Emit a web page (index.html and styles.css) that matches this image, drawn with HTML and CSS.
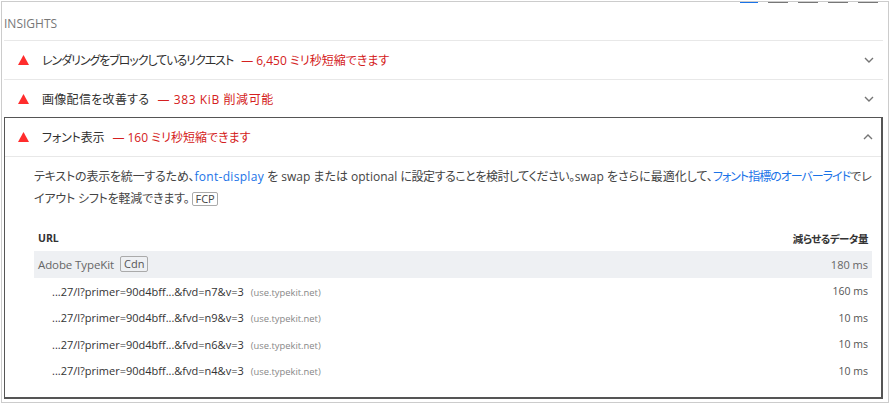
FILE: index.html
```html
<!DOCTYPE html>
<html lang="ja">
<head>
<meta charset="utf-8">
<title>Insights</title>
<link rel="stylesheet" href="styles.css">
</head>
<body>
<div class="frame">
  <div class="tabs">
    <span class="tab tab-active"></span>
    <span class="tab"></span>
    <span class="tab"></span>
    <span class="tab"></span>
    <span class="tab"></span>
  </div>
  <div class="section-title">INSIGHTS</div>
  <div class="row">
    <svg class="warn" width="11" height="10" viewBox="0 0 11 10"><path d="M5.5 0L11 10H0Z"/></svg>
    <span class="row-title title-kana">レンダリングをブロックしているリクエスト</span>
    <span class="row-note">— 6,450 ミリ秒短縮できます</span>
    <svg class="chev" width="10" height="6" viewBox="0 0 10 6"><path d="M1 1L5 5L9 1"/></svg>
  </div>
  <div class="row">
    <svg class="warn" width="11" height="10" viewBox="0 0 11 10"><path d="M5.5 0L11 10H0Z"/></svg>
    <span class="row-title title-kanji">画像配信を改善する</span>
    <span class="row-note note-wide">— 383 KiB 削減可能</span>
    <svg class="chev" width="10" height="6" viewBox="0 0 10 6"><path d="M1 1L5 5L9 1"/></svg>
  </div>
  <div class="panel">
    <div class="row row-open">
      <svg class="warn" width="11" height="10" viewBox="0 0 11 10"><path d="M5.5 0L11 10H0Z"/></svg>
      <span class="row-title">フォント表示</span>
      <span class="row-note">— 160 ミリ秒短縮できます</span>
      <svg class="chev" width="10" height="6" viewBox="0 0 10 6"><path d="M1 5L5 1L9 5"/></svg>
    </div>
    <div class="panel-body">
      <p class="desc"><span class="tight-s">テキストの表示を統一するため、</span><a class="link link-code">font-display</a> を swap または optional <span class="tight-m">に設定することを検討してください。</span>swap をさらに最適化して、<a class="link link-kana">フォント指標のオーバーライド</a>でレ<br><span class="tight-s">イアウト シフトを軽減できます。</span><span class="tag">FCP</span></p>
      <div class="table">
        <div class="thead"><span>URL</span><span class="thead-savings">減らせるデータ量</span></div>
        <div class="group"><span class="group-name">Adobe TypeKit<span class="tag tag-cdn">Cdn</span></span><span class="group-val">180 ms</span></div>
        <div class="items">
          <div class="item"><span class="url">...27/l?primer=90d4bff...&amp;fvd=n7&amp;v=3<span class="host">(use.typekit.net)</span></span><span class="val">160 ms</span></div>
          <div class="item"><span class="url">...27/l?primer=90d4bff...&amp;fvd=n9&amp;v=3<span class="host">(use.typekit.net)</span></span><span class="val">10 ms</span></div>
          <div class="item"><span class="url">...27/l?primer=90d4bff...&amp;fvd=n6&amp;v=3<span class="host">(use.typekit.net)</span></span><span class="val">10 ms</span></div>
          <div class="item"><span class="url">...27/l?primer=90d4bff...&amp;fvd=n4&amp;v=3<span class="host">(use.typekit.net)</span></span><span class="val">10 ms</span></div>
        </div>
      </div>
    </div>
  </div>
</div>
</body>
</html>
```
FILE: styles.css
```css
* { box-sizing: border-box; }
html, body { margin: 0; padding: 0; background: #fff; }
body {
  width: 890px;
  height: 404px;
  overflow: hidden;
  font-family: "Open Sans", "Noto Sans CJK JP", sans-serif;
  font-feature-settings: "palt";
  font-size: 12px;
  color: #333;
}
.frame {
  position: relative;
  margin: 1px 1px 0 1px;
  width: 888px;
  height: 402px;
  border: 1px solid #ccc;
  padding: 0 5px 0 2px;
}
.tabs {
  position: absolute;
  top: 0;
  left: 738px;
  display: flex;
  gap: 10px;
}
.tab { width: 20px; height: 1px; background: #777; }
.tab-active { width: 18px; background: #1a73e8; }
.section-title {
  height: 38px;
  padding: 14px 0 0 0;
  font-size: 12px;
  line-height: 15px;
  color: #777;
}
.row {
  display: flex;
  align-items: center;
  height: 39px;
  border-top: 1px solid #e8e8e8;
  padding: 0 9px 0 14px;
}
.warn { flex: none; fill: #ff2d2d; margin-right: 13px; }
.row-title { color: #303030; letter-spacing: -0.15px; }
.title-kana { letter-spacing: -1.05px; }
.title-kanji { letter-spacing: 0.3px; }
.row-note { color: #d42020; margin-left: 8px; }
.note-wide { letter-spacing: 0.6px; }
.chev { flex: none; margin-left: auto; fill: none; stroke: #757575; stroke-width: 1.4; }
.panel {
  height: 282px;
  border: 1px solid #555;
  border-right-width: 2px;
  border-bottom-width: 2px;
  margin-top: -1px;
}
.row-open {
  height: 39px;
  border-top: 0;
  border-bottom: 1px solid #e8e8e8;
  padding: 0 8px 0 13px;
}
.panel-body { padding: 9px 9px 0 29px; }
.desc {
  margin: 0;
  line-height: 21.5px;
  color: #444;
  font-size: 12px;
  white-space: nowrap;
}
.tight-s { letter-spacing: -0.2px; }
.tight-m { letter-spacing: -0.45px; }
.link { color: #1a73e8; }
.link-code { letter-spacing: 0.3px; }
.link-kana { letter-spacing: -1px; }
.tag {
  display: inline-block;
  margin-left: 3px;
  padding: 0 2px;
  border: 1px solid #aaa;
  border-radius: 2px;
  line-height: 12px;
  font-size: 11px;
  color: #444;
}
.table { margin-top: 16.5px; }
.thead {
  display: flex;
  justify-content: space-between;
  height: 25px;
  align-items: center;
  padding: 0 4px;
  font-size: 10.5px;
  font-weight: 700;
  color: #333;
}
.thead-savings { letter-spacing: -0.5px; }
.group, .item {
  display: flex;
  justify-content: space-between;
  align-items: center;
  padding: 0 4px;
}
.group {
  height: 27px;
  background: #eef0f3;
  color: #666;
  font-size: 11.5px;
}
.group-name { display: flex; align-items: center; letter-spacing: -0.1px; }
.group-val { font-size: 11px; }
.tag-cdn { margin-left: 6px; line-height: 14px; padding: 0 3px; color: #555; letter-spacing: 0; }
.items { padding-top: 0.5px; }
.item { height: 26.5px; padding-left: 18px; }
.url { font-size: 11px; color: #333; }
.host { margin-left: 7px; font-size: 9.4px; color: #888; }
.val { font-size: 10.5px; color: #555; }
```
